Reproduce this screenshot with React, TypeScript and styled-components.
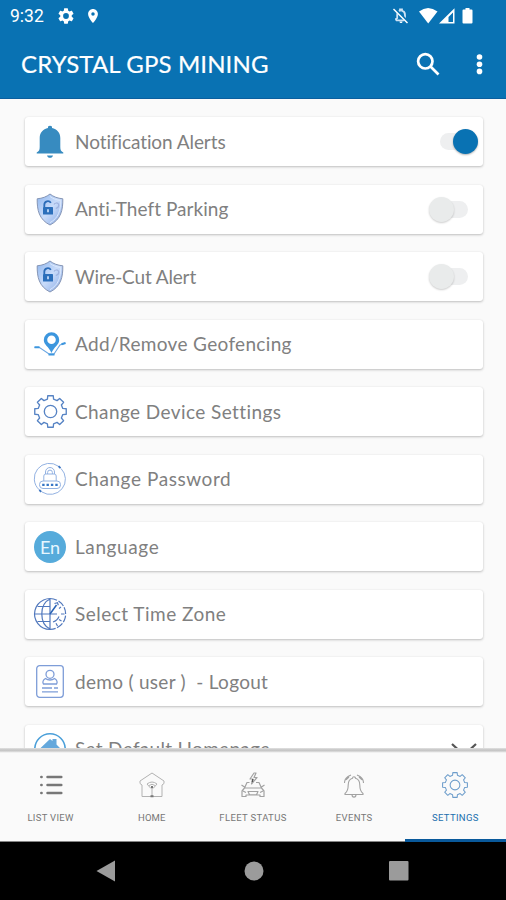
import React from 'react';
import styled, { createGlobalStyle } from 'styled-components';

const Global = createGlobalStyle`
  * { box-sizing: border-box; }
  body { margin: 0; background: #fafafa; overflow: hidden; }
  svg { display: block; flex: none; overflow: visible; }
`;

const Screen = styled.div`
  width: 506px;
  height: 900px;
  display: flex;
  flex-direction: column;
  overflow: hidden;
  background: #fafafa;
  font-family: Lato, "Open Sans", sans-serif;
  font-variant-ligatures: none;
`;

const Header = styled.header`
  flex: none;
  height: 99px;
  background: #0972b3;
  border-bottom: 1px solid #0a5f9f;
  color: #fff;
`;

const StatusBar = styled.div`
  height: 32px;
  padding: 0 33px 0 10px;
  display: flex;
  align-items: center;
`;

const Clock = styled.span`
  width: 48px;
  font: 400 17.5px/32px Roboto, sans-serif;
  letter-spacing: 0;
`;

const StatusGroup = styled.div<{ $gap: number; $end?: boolean }>`
  display: flex;
  align-items: center;
  gap: ${(p) => p.$gap}px;
  margin-left: ${(p) => (p.$end ? 'auto' : '0')};
`;

const AppBar = styled.div`
  height: 64px;
  display: flex;
  align-items: center;
  padding: 0 21px;
`;

const Title = styled.h1`
  margin: 0;
  flex: 1;
  font-size: 24px;
  line-height: 30px;
  font-weight: 400;
  letter-spacing: 0.12px;
  white-space: nowrap;
  -webkit-text-stroke: 0.2px #fff;
`;

const Actions = styled.div`
  display: flex;
  align-items: center;
  gap: 35px;
`;

const List = styled.main`
  flex: 1;
  min-height: 0;
  overflow: hidden;
  padding: 18px 23px 0 25px;
  display: flex;
  flex-direction: column;
  gap: 18.5px;
`;

const Card = styled.div`
  flex: none;
  height: 49px;
  padding: 0 5px 0 9px;
  display: flex;
  align-items: center;
  background: #fff;
  border-radius: 3px;
  box-shadow: 0 1px 2.5px rgba(0, 0, 0, 0.24), 0 0 1px rgba(0, 0, 0, 0.08);
`;

const CardIcon = styled.div`
  width: 32px;
  height: 34px;
  margin-right: 9px;
  display: flex;
  align-items: center;
  justify-content: center;
`;

const CardLabel = styled.span<{ $spacing: number }>`
  flex: 1;
  font-size: 19px;
  line-height: 26px;
  color: #808080;
  white-space: pre;
  letter-spacing: ${(p) => p.$spacing}px;
`;

const Toggle = styled.div<{ $on?: boolean }>`
  display: flex;
  align-items: center;
  flex-direction: ${(p) => (p.$on ? 'row-reverse' : 'row')};
  margin-right: ${(p) => (p.$on ? 0.5 : 10)}px;
`;

const Knob = styled.div<{ $on?: boolean }>`
  z-index: 1;
  width: 25px;
  height: 25px;
  border-radius: 50%;
  background: ${(p) => (p.$on ? '#0972b3' : '#e9ebeb')};
  box-shadow: 0 1px 2px rgba(0, 0, 0, ${(p) => (p.$on ? 0.3 : 0.2)});
`;

const Track = styled.div<{ $on?: boolean }>`
  width: 24px;
  height: 17px;
  margin: ${(p) => (p.$on ? '0 -11px 0 0' : '0 0 0 -10px')};
  border-radius: 9px;
  background: #eeeff0;
`;

const EnBadge = styled.div`
  width: 32px;
  height: 32px;
  border-radius: 50%;
  background: #56abdb;
  color: #e6f7ff;
  text-align: center;
  font-size: 18px;
  line-height: 32px;
`;

const TabBar = styled.nav`
  flex: none;
  height: 94px;
  border-bottom: 1px solid #858585;
  display: grid;
  grid-template-columns: repeat(5, 1fr);
  background: linear-gradient(#e2e2e2 0, #c4c4c4 2px, #c9c9c9 3px, #e6e6e6 4px, #fafafa 5px);
`;

const Tab = styled.div<{ $active?: boolean }>`
  height: 94px;
  padding-top: 24px;
  display: flex;
  flex-direction: column;
  align-items: center;
  gap: 14px;
  color: ${(p) => (p.$active ? '#216fae' : '#777')};
  border-bottom: ${(p) => (p.$active ? '3px solid #09599b' : 'none')};
`;

const TabLabel = styled.span<{ $spacing: number }>`
  font: 400 9.5px/12px Roboto, sans-serif;
  letter-spacing: ${(p) => p.$spacing}px;
  white-space: nowrap;
`;

const NavBar = styled.footer`
  flex: none;
  height: 58px;
  padding: 0 97px 0 96px;
  background: #000;
  display: flex;
  align-items: center;
  justify-content: space-between;
`;

/* Outline of a gear with eight teeth, centred on 16,16. */
const gearPath = (() => {
  const points: string[] = [];
  const at = (r: number, deg: number) => {
    const a = (deg * Math.PI) / 180;
    return `${(16 + r * Math.cos(a)).toFixed(2)} ${(16 + r * Math.sin(a)).toFixed(2)}`;
  };
  for (let i = 0; i < 8; i++) {
    const c = i * 45 - 90;
    points.push(at(12.3, c - 14), at(15.5, c - 10), at(15.5, c + 10), at(12.3, c + 14));
  }
  return `M${points.join('L')}Z`;
})();

const Gear = ({ size, color, width }: { size: number; color: string; width: number }) => (
  <svg width={size} height={size} viewBox="0 0 32 32" fill="none" stroke={color} strokeWidth={width} strokeLinejoin="round">
    <path d={gearPath} />
    <circle cx="16" cy="16" r="6" />
  </svg>
);

const BellSolid = () => (
  <svg width="28" height="34" viewBox="0 0 28 34" fill="#378bc0">
    <path d="M14 .8a2 2 0 0 1 2 2.300C21 4 24.300 8 24.300 13v9c0 3 .7 4.200 3 5.500V28.600H.7v-1.100C3 26.200 3.700 25 3.700 22v-9C3.700 8 7 4 12 3.100A2 2 0 0 1 14 .8Z" />
    <path d="M11 30.500h6c-.4 1.600-1.500 2.300-3 2.300s-2.600-.7-3-2.300Z" />
  </svg>
);

const Shield = () => (
  <svg width="28" height="33" viewBox="0 0 28 33" fill="none">
    <defs>
      <linearGradient id="shieldFill" x1="0" y1="0" x2="1" y2="1">
        <stop offset="0" stopColor="#8fb6ee" />
        <stop offset=".5" stopColor="#c9dcfa" />
        <stop offset="1" stopColor="#86a8e4" />
      </linearGradient>
    </defs>
    <path d="M14 1c3.500 2.800 7.500 4.300 12.800 4.800C27 17 25 26.500 14 32 3 26.500 1 17 1.200 5.800 6.500 5.300 10.500 3.800 14 1Z" fill="url(#shieldFill)" stroke="#8595b5" strokeWidth="1" />
    <path d="M14 3.500c3 2.200 6.300 3.400 10.700 4C24.700 17.500 22.500 25 14 29.700" stroke="#dbe8fc" strokeWidth="1" />
    <path d="M8.300 14v-2.300a3.500 3.500 0 0 1 6.500-1.800" stroke="#2b6cb8" strokeWidth="1.800" />
    <path d="M18 11.500c1-2 3.800-2 4.600-.2.600 2-1 3.500-2.800 4.200" stroke="#9fb2de" strokeWidth="1.200" />
    <rect x="7" y="14" width="10" height="7.500" rx=".6" fill="#2b6fbb" />
    <path d="M12 16.300v3" stroke="#d6e7ff" strokeWidth="1.600" />
  </svg>
);

const Geofence = () => (
  <svg width="32" height="26" viewBox="0 0 32 26" fill="none">
    <path d="M.5 16.500h5L15 23h5l6-9 5.500-2" stroke="#6aa6e2" strokeWidth="1.100" />
    <path d="M.5 16.300h5M14.500 23.500h6M27.500 13.300l4-1.300" stroke="#3c96de" strokeWidth="2" />
    <path fillRule="evenodd" d="M17.500 1.200a7.700 7.700 0 0 1 7.700 7.700c0 5-5 6.500-7.700 13.100-2.700-6.600-7.700-8.100-7.700-13.100a7.700 7.700 0 0 1 7.700-7.700Zm0 3.300a4.300 4.300 0 1 0 0 8.600 4.300 4.300 0 0 0 0-8.600Z" fill="#3c96de" />
  </svg>
);

const Password = () => (
  <svg width="32" height="32" viewBox="0 0 32 32" fill="none" stroke="#93b2e2" strokeWidth="1">
    <path d="M5.500 27A15.200 15.200 0 0 1 24.500 3.300M27 5.500A15.200 15.200 0 0 1 8 29" />
    <path d="M24.500 3.200l2 2M5.300 27l2 1.800" stroke="#3b74c2" strokeWidth="1.800" />
    <path d="M11.500 11V9a4.500 4.500 0 0 1 9 0V11M13.600 11V9.500a2.400 2.400 0 0 1 4.800 0V11" />
    <path d="M9.800 18v-5q0-2 2-2h8.400q2 0 2 2v5" />
    <rect x="5.500" y="18" width="21" height="7.500" rx="3.500" />
    <path d="M8.200 21.800h2.400M12.500 21.800h2.400M16.900 21.800h2.400M21.300 21.800h2.400" stroke="#3575c6" strokeWidth="2.200" />
  </svg>
);

const TimeZone = () => (
  <svg width="32" height="32" viewBox="0 0 32 32" fill="none" stroke="#5178bd" strokeWidth="1.200">
    <path d="M16 31.400A15.400 15.400 0 1 1 23 2.300" />
    <path d="M24.500 3A15.400 15.400 0 0 1 16 31.400" strokeDasharray="7 1.500" />
    <path d="M16 .6v30.800M.6 16H23M3.500 8.500H16M3.500 23.500H16M16 1C9.500 4 7.800 10 7.800 16S9.500 28 16 31" />
    <path d="M16 16l6.500-9" stroke="#2862b5" strokeWidth="1.500" />
    <path d="M20.500 5.500l3-.8.800 2.500M27 9l-2 1.400M30.500 16H27M27.500 23l-2.500-1.500M23.500 28l-1.500-2.700M19 24c3-1 5-3 6-5.500" />
  </svg>
);

const UserCard = () => (
  <svg width="28" height="33" viewBox="0 0 28 33" fill="none" stroke="#7e9dd8" strokeWidth="1.300">
    <rect x=".7" y=".7" width="26.600" height="31.600" rx="3" />
    <circle cx="14" cy="9.300" r="4" />
    <path d="M9.500 13.500C7 15 6.200 17.200 7.500 19h13c1.300-1.800.5-4-2-5.500-2.500 2-6.500 2-9 0ZM6 23h10M18 23h4M6 26.800h16" />
  </svg>
);

const HomeCircle = () => (
  <svg width="32" height="32" viewBox="0 0 32 32" fill="none">
    <circle cx="16" cy="16" r="15.200" stroke="#4a9fd9" strokeWidth="1.600" />
    <path d="M5 16.500L16 6l2.500 2V6h4v5.500l5 5V26H8v-9.500Z" fill="#64a8dc" />
  </svg>
);

const Chevron = () => (
  <svg width="26" height="15" viewBox="0 0 26 15" fill="none" stroke="#555" strokeWidth="2.200">
    <path d="M0 2l12 11L24 2" />
  </svg>
);

type Row = { label: string; spacing: number; icon: React.ReactNode; toggle?: 'on' | 'off'; expand?: boolean };

const rows: Row[] = [
  { label: 'Notification Alerts', spacing: -0.08, icon: <BellSolid />, toggle: 'on' },
  { label: 'Anti-Theft Parking', spacing: 0.04, icon: <Shield />, toggle: 'off' },
  { label: 'Wire-Cut Alert', spacing: -0.14, icon: <Shield />, toggle: 'off' },
  { label: 'Add/Remove Geofencing', spacing: 0.33, icon: <Geofence /> },
  { label: 'Change Device Settings', spacing: 0.41, icon: <Gear size={33} color="#5683c4" width={1.3} /> },
  { label: 'Change Password', spacing: 0.57, icon: <Password /> },
  { label: 'Language', spacing: 0.6, icon: <EnBadge>En</EnBadge> },
  { label: 'Select Time Zone', spacing: 0.48, icon: <TimeZone /> },
  { label: 'demo ( user )  - Logout', spacing: 0.29, icon: <UserCard /> },
  { label: 'Set Default Homepage', spacing: 0.3, icon: <HomeCircle />, expand: true },
];

const ListIcon = () => (
  <svg width="26" height="26" viewBox="0 0 26 26" fill="none" stroke="#777" strokeWidth="2.500" strokeLinecap="round">
    <path d="M9.500 5h13.800M9.500 13h13.800M9.500 21h13.800M3.300 5h.3M3.300 13h.3M3.300 21h.3" />
  </svg>
);

const HomeIcon = () => (
  <svg width="26" height="26" viewBox="0 0 26 26" fill="none" stroke="#b2b2b2" strokeWidth="1">
    <path d="M10 24.500H3V13L1 11.500V9L13 1l12 8v2.500L23 13v11.500h-7" />
    <path d="M8 12q5-4 10 0l-3.500 4h-3ZM10 13.500q3-2.500 6 0M13 15v9M9.500 24.500h7" />
    <path d="M12 15h2M11.500 24.300h3" stroke="#777" strokeWidth="2" />
  </svg>
);

const CarIcon = () => (
  <svg width="26" height="26" viewBox="0 0 26 26" fill="none" stroke="#a2a2a2" strokeWidth="1.200" strokeLinejoin="round">
    <path d="M9.500 10.500H7L4.500 16 2 19v5.500h4V23h14v1.500h4V19l-2.500-3-2.500-5.500h-3M5 16h16M1.500 13l3 2M24.500 13l-3 2M8 19.500h10l-1.500 3.300h-7ZM3 19l3 1.500M23 19l-3 1.500" />
    <path d="M14 1l-4 6h3l-1.500 5L17 5.500h-3L16 1Z" />
    <path d="M12.800 7l-.5 3" stroke="#555" strokeWidth="1.400" />
  </svg>
);

const EventIcon = () => (
  <svg width="22" height="26" viewBox="0 0 22 26" fill="none" stroke="#a2a2a2" strokeWidth="1.100">
    <path d="M9.500 6.300a1.500 1.500 0 1 1 3 0c3.500 1 4.300 3.700 4.300 6.700 0 4 .7 6.500 3.200 8.500v1H2v-1c2.500-2 3.200-4.500 3.200-8.500 0-3 .8-5.700 4.300-6.700Z" />
    <path d="M9 22.500c0 3.500 4 3.500 4 0M6 5L3 7.800M1.500 11q0-4 3.500-6.500l3-1.500M16 5l3 2.800M20.500 11q0-4-3.500-6.500L14 3" />
  </svg>
);

const tabs = [
  { label: 'LIST VIEW', spacing: 0.3, icon: <ListIcon /> },
  { label: 'HOME', spacing: 0.1, icon: <HomeIcon /> },
  { label: 'FLEET STATUS', spacing: 0.35, icon: <CarIcon /> },
  { label: 'EVENTS', spacing: 0.35, icon: <EventIcon /> },
  { label: 'SETTINGS', spacing: 0.35, icon: <Gear size={26} color="#6d9dcb" width={1.3} />, active: true },
];

export default function App() {
  return (
    <Screen>
      <Global />
      <Header>
        <StatusBar>
          <Clock>9:32</Clock>
          <StatusGroup $gap={14}>
            <svg width="16" height="16" viewBox="2 2 20 20" fill="#fff">
              <path d="M19.140 12.940c.04-.3.060-.610.060-.940 0-.320-.020-.640-.070-.940l2.030-1.580a.49.49 0 0 0 .12-.61l-1.920-3.320a.488.488 0 0 0-.59-.22l-2.390.96c-.5-.38-1.030-.7-1.620-.94l-.36-2.540a.484.484 0 0 0-.48-.41h-3.840c-.24 0-.43.17-.47.41l-.36 2.540c-.59.24-1.130.57-1.620.94l-2.390-.96a.48.48 0 0 0-.59.22L2.740 8.870c-.12.21-.08.47.12.61l2.030 1.580c-.05.3-.09.63-.09.94s.02.64.07.94l-2.030 1.580a.49.49 0 0 0-.12.61l1.920 3.320c.12.22.37.29.59.22l2.390-.96c.5.38 1.030.7 1.620.94l.36 2.540c.05.24.24.41.48.41h3.840c.24 0 .44-.17.47-.41l.36-2.540c.59-.24 1.130-.56 1.620-.94l2.390.96c.22.08.47 0 .59-.22l1.920-3.320a.48.48 0 0 0-.12-.61l-2.010-1.580ZM12 15.600A3.600 3.600 0 1 1 12 8.400a3.600 3.600 0 0 1 0 7.200Z" />
            </svg>
            <svg width="10" height="14" viewBox="5 2 14 20" fill="#fff">
              <path d="M12 2C8.130 2 5 5.130 5 9c0 5.250 7 13 7 13s7-7.750 7-13c0-3.870-3.130-7-7-7Zm0 9.500a2.500 2.500 0 1 1 0-5 2.500 2.500 0 0 1 0 5Z" />
            </svg>
          </StatusGroup>
          <StatusGroup $end $gap={0}>
            <svg width="80" height="16" viewBox="0 0 80 16" fill="#fff">
              <path d="M3 12.500V11l1.200-1V7c0-2 1-3.800 2.800-4.300V1.500h2v1.200C11 3.200 12 5 12 7v4M3 12.300h8" fill="none" stroke="#cfe3f5" strokeWidth="1.800" />
              <path d="M6.500 13.500h3c0 2-3 2-3 0Z" />
              <path d="M1 .2l14 14" stroke="#0972b3" strokeWidth="3" />
              <path d="M.5 1l14 14" stroke="#fff" strokeWidth="1.500" />
              <path d="M26 3.500Q35-3.500 44.500 3.500L35.200 15.500Z" />
              <path fillRule="evenodd" d="M61.500 .2V15.500H46ZM60 4.500L55.500 9V14H60Z" />
              <path d="M72.500 0h4V1.500h2q1 0 1 1v12q0 1-1 1h-8q-1 0-1-1v-12q0-1 1-1h2Z" />
            </svg>
          </StatusGroup>
        </StatusBar>
        <AppBar>
          <Title>CRYSTAL GPS MINING</Title>
          <Actions>
            <svg width="24" height="24" viewBox="0 0 24 24" fill="none" stroke="#fff" strokeWidth="2.700">
              <circle cx="9.300" cy="9.300" r="7.200" />
              <path d="M14.500 14.500l8 8" />
            </svg>
            <svg width="10" height="22" viewBox="0 0 10 22" fill="#fff">
              <circle cx="4.500" cy="4" r="2.800" />
              <circle cx="4.500" cy="11.200" r="2.800" />
              <circle cx="4.500" cy="18.400" r="2.800" />
            </svg>
          </Actions>
        </AppBar>
      </Header>
      <List>
        {rows.map((row) => (
          <Card key={row.label}>
            <CardIcon>{row.icon}</CardIcon>
            <CardLabel $spacing={row.spacing}>{row.label}</CardLabel>
            {row.toggle && (
              <Toggle $on={row.toggle === 'on'}>
                <Knob $on={row.toggle === 'on'} />
                <Track $on={row.toggle === 'on'} />
              </Toggle>
            )}
            {row.expand && (
              <StatusGroup $end $gap={0}>
                <Chevron />
              </StatusGroup>
            )}
          </Card>
        ))}
      </List>
      <TabBar>
        {tabs.map((tab) => (
          <Tab key={tab.label} $active={tab.active}>
            {tab.icon}
            <TabLabel $spacing={tab.spacing}>{tab.label}</TabLabel>
          </Tab>
        ))}
      </TabBar>
      <NavBar>
        <svg width="19" height="22" viewBox="0 0 19 22" fill="#9b9b9b">
          <path d="M.5 11L19 .5v21Z" />
        </svg>
        <svg width="20" height="20" viewBox="-2 0 20 20" fill="#9b9b9b">
          <circle cx="10" cy="10" r="9.500" />
        </svg>
        <svg width="20" height="20" viewBox="0 0 20 20" fill="#9b9b9b">
          <rect x="0" y="0" width="19.500" height="19.500" rx="1" />
        </svg>
      </NavBar>
    </Screen>
  );
}
